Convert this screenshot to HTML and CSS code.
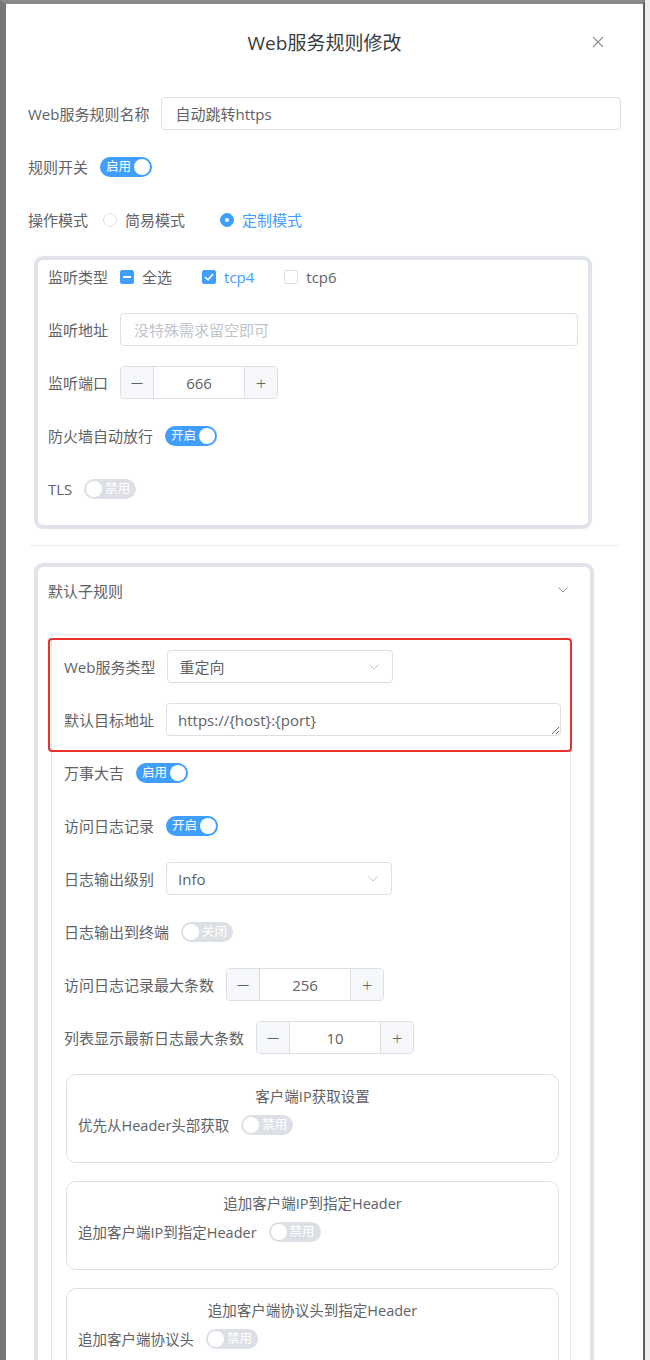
FILE: index.html
```html
<!DOCTYPE html>
<html lang="zh-CN">
<head>
<meta charset="utf-8">
<title>Web服务规则修改</title>
<link rel="stylesheet" href="styles.css">
</head>
<body>
<div class="frame">
  <div class="dialog">
    <div class="dialog-header">
      <span></span>
      <span class="dialog-title">Web服务规则修改</span>
      <span class="close"><svg width="12" height="12" viewBox="0 0 12 12"><path d="M1 1L11 11M11 1L1 11" stroke="#909399" stroke-width="1.2" fill="none"/></svg></span>
    </div>
    <div class="dialog-body">
      <div class="row">
        <span class="lbl">Web服务规则名称</span>
        <div class="input grow">自动跳转https</div>
      </div>
      <div class="row">
        <span class="lbl">规则开关</span>
        <span class="switch on"><span class="sw-txt">启用</span><span class="knob"></span></span>
      </div>
      <div class="row">
        <span class="lbl">操作模式</span>
        <span class="radio first"><span class="rd"></span><span>简易模式</span></span>
        <span class="radio checked"><span class="rd"><span class="dot"></span></span><span>定制模式</span></span>
      </div>

      <div class="box box1">
        <div class="row">
          <span class="lbl">监听类型</span>
          <span class="check"><span class="cb ind"><span class="bar"></span></span><span>全选</span></span>
          <span class="check checked"><span class="cb on"><svg width="10" height="8" viewBox="0 0 10 8"><path d="M1 4L4 6.8L9 1" stroke="#fff" stroke-width="1.6" fill="none"/></svg></span><span>tcp4</span></span>
          <span class="check"><span class="cb"></span><span>tcp6</span></span>
        </div>
        <div class="row">
          <span class="lbl">监听地址</span>
          <div class="input grow placeholder">没特殊需求留空即可</div>
        </div>
        <div class="row">
          <span class="lbl">监听端口</span>
          <div class="num"><span class="nbtn minus">—</span><span class="nval">666</span><span class="nbtn plus">+</span></div>
        </div>
        <div class="row">
          <span class="lbl">防火墙自动放行</span>
          <span class="switch on"><span class="sw-txt">开启</span><span class="knob"></span></span>
        </div>
        <div class="row">
          <span class="lbl">TLS</span>
          <span class="switch off"><span class="knob"></span><span class="sw-txt">禁用</span></span>
        </div>
      </div>

      <div class="divider"></div>

      <div class="box box2">
        <div class="collapse-head">
          <span class="collapse-title">默认子规则</span>
          <svg width="10" height="6" viewBox="0 0 10 6"><path d="M0.5 0.5L5 5L9.5 0.5" stroke="#909399" stroke-width="1" fill="none"/></svg>
        </div>
        <div class="inner">
          <div class="hl">
            <div class="row">
              <span class="lbl">Web服务类型</span>
              <div class="select"><span>重定向</span><svg width="10" height="6" viewBox="0 0 10 6"><path d="M0.5 0.5L5 5L9.5 0.5" stroke="#c0c4cc" stroke-width="1" fill="none"/></svg></div>
            </div>
            <div class="row">
              <span class="lbl">默认目标地址</span>
              <textarea class="ta" readonly>https://{host}:{port}</textarea>
            </div>
          </div>
          <div class="row">
            <span class="lbl">万事大吉</span>
            <span class="switch on"><span class="sw-txt">启用</span><span class="knob"></span></span>
          </div>
          <div class="row">
            <span class="lbl">访问日志记录</span>
            <span class="switch on"><span class="sw-txt">开启</span><span class="knob"></span></span>
          </div>
          <div class="row">
            <span class="lbl">日志输出级别</span>
            <div class="select"><span>Info</span><svg width="10" height="6" viewBox="0 0 10 6"><path d="M0.5 0.5L5 5L9.5 0.5" stroke="#c0c4cc" stroke-width="1" fill="none"/></svg></div>
          </div>
          <div class="row">
            <span class="lbl">日志输出到终端</span>
            <span class="switch off"><span class="knob"></span><span class="sw-txt">关闭</span></span>
          </div>
          <div class="row">
            <span class="lbl">访问日志记录最大条数</span>
            <div class="num"><span class="nbtn minus">—</span><span class="nval">256</span><span class="nbtn plus">+</span></div>
          </div>
          <div class="row">
            <span class="lbl">列表显示最新日志最大条数</span>
            <div class="num"><span class="nbtn minus">—</span><span class="nval">10</span><span class="nbtn plus">+</span></div>
          </div>

          <div class="card">
            <div class="card-title">客户端IP获取设置</div>
            <div class="row card-row">
              <span class="lbl">优先从Header头部获取</span>
              <span class="switch off"><span class="knob"></span><span class="sw-txt">禁用</span></span>
            </div>
          </div>
          <div class="card">
            <div class="card-title">追加客户端IP到指定Header</div>
            <div class="row card-row">
              <span class="lbl">追加客户端IP到指定Header</span>
              <span class="switch off"><span class="knob"></span><span class="sw-txt">禁用</span></span>
            </div>
          </div>
          <div class="card">
            <div class="card-title">追加客户端协议头到指定Header</div>
            <div class="row card-row">
              <span class="lbl">追加客户端协议头</span>
              <span class="switch off"><span class="knob"></span><span class="sw-txt">禁用</span></span>
            </div>
          </div>
        </div>
      </div>
    </div>
  </div>
</div>
</body>
</html>
```
FILE: styles.css
```css
* { box-sizing: border-box; }
html, body { margin: 0; height: 1360px; overflow: hidden; }
body {
  background: #ededed;
  font-family: "Open Sans", "Noto Sans CJK SC", sans-serif;
  font-size: 15px;
  color: #606266;
}
.frame {
  width: 645px;
  height: 1360px;
  border-left: 6px solid #767676;
  border-top: 4px solid #8a8a8a;
  border-right: 2px solid #5e5e5e;
  background: #fff;
}
.dialog { width: 100%; }
.dialog-header {
  height: 76px;
  display: grid;
  grid-template-columns: 1fr auto 1fr;
  align-items: center;
  padding: 0 22px;
}
.dialog-title { font-size: 19px; color: #3a3c40; }
.close { justify-self: end; margin-right: 17px; display: flex; }
.dialog-body { padding: 17px 22px 0 22px; }

.row {
  display: flex;
  align-items: center;
  height: 33px;
  margin-bottom: 20px;
}
.lbl { padding-right: 12px; white-space: nowrap; }
.grow { flex: 1; }
.input {
  height: 33px;
  border: 1px solid #dcdfe6;
  border-radius: 4px;
  padding: 0 13px;
  display: flex;
  align-items: center;
  color: #606266;
}
.placeholder { color: #c0c4cc; }

.switch {
  display: inline-flex;
  align-items: center;
  justify-content: space-between;
  width: 52px;
  height: 20px;
  border-radius: 10px;
  padding: 0 2px 0 6px;
  background: #409eff;
}
.switch.off { background: #dcdfe6; padding: 0 6px 0 2px; }
.knob { width: 16px; height: 16px; border-radius: 50%; background: #fff; }
.sw-txt { font-size: 12.5px; color: #fff; line-height: 20px; }

.radio { display: inline-flex; align-items: center; gap: 8px; margin-right: 35px; }
.radio.first { margin-left: 3px; }
.rd {
  width: 14px; height: 14px; border-radius: 50%;
  border: 1px solid #dcdfe6; background: #fff;
  display: flex; align-items: center; justify-content: center;
}
.radio.checked .rd { background: #409eff; border-color: #409eff; }
.radio.checked { color: #409eff; }
.dot { width: 4px; height: 4px; border-radius: 50%; background: #fff; }

.check { display: inline-flex; align-items: center; gap: 8px; margin-right: 30px; }
.check.checked { color: #409eff; }
.cb {
  width: 14px; height: 14px; border-radius: 2px;
  border: 1px solid #dcdfe6; background: #fff;
  display: flex; align-items: center; justify-content: center;
}
.cb.on, .cb.ind { background: #409eff; border-color: #409eff; }
.bar { width: 8px; height: 2px; background: #fff; }

.box {
  border: 4px solid #e0e3e9;
  border-radius: 9px;
  box-shadow: 0 0 2px rgba(0, 0, 0, 0.06);
}
.box1 { margin: 1px 0 0 6px; width: 558px; padding: 0 10px; }
.box2 { margin: 0 0 0 6px; width: 560px; height: 900px; }

.num {
  display: flex;
  width: 158px;
  height: 33px;
  border: 1px solid #dcdfe6;
  border-radius: 4px;
  overflow: hidden;
}
.nbtn {
  width: 33px;
  background: #f5f7fa;
  display: flex; align-items: center; justify-content: center;
  color: #606266;
  font-size: 14px;
}
.nbtn.minus { border-right: 1px solid #dcdfe6; font-size: 12px; }
.nbtn.plus { border-left: 1px solid #dcdfe6; font-size: 18px; font-weight: 300; }
.nval { flex: 1; display: flex; align-items: center; justify-content: center; }

.divider { height: 1px; background: #ebeef5; margin: 16px 2px 17px 2px; }

.collapse-head {
  height: 46px;
  display: flex;
  align-items: center;
  justify-content: space-between;
  padding: 0 22px 0 10px;
}
.inner {
  margin: 21px 19px 0 13px;
  border: 1px solid #e4e7ed;
  padding: 15px 9px 0 12px;
  height: 800px;
}
.hl { position: relative; }
.hl::after {
  content: "";
  position: absolute;
  top: -12px; bottom: -16px; left: -16px; right: -11px;
  border: 2px solid #e8312c;
  border-radius: 4px;
  pointer-events: none;
}
.select {
  width: 226px;
  height: 33px;
  border: 1px solid #dcdfe6;
  border-radius: 4px;
  display: flex;
  align-items: center;
  justify-content: space-between;
  padding: 0 13px 0 11px;
}
.ta {
  flex: 1;
  height: 33px;
  border: 1px solid #dcdfe6;
  border-radius: 4px;
  padding: 6px 11px 4px 11px;
  font: inherit;
  font-size: 15px;
  line-height: 21px;
  color: #606266;
  resize: vertical;
  outline: none;
}

.card {
  margin: 1px 2px 18px 2px;
  border: 1px solid #dcdfe6;
  border-radius: 10px;
  padding: 11px 11px 21px 11px;
  font-size: 14.5px;
}
.card-title { text-align: center; line-height: 22px; }
.card-row { margin-bottom: 0; }
```
